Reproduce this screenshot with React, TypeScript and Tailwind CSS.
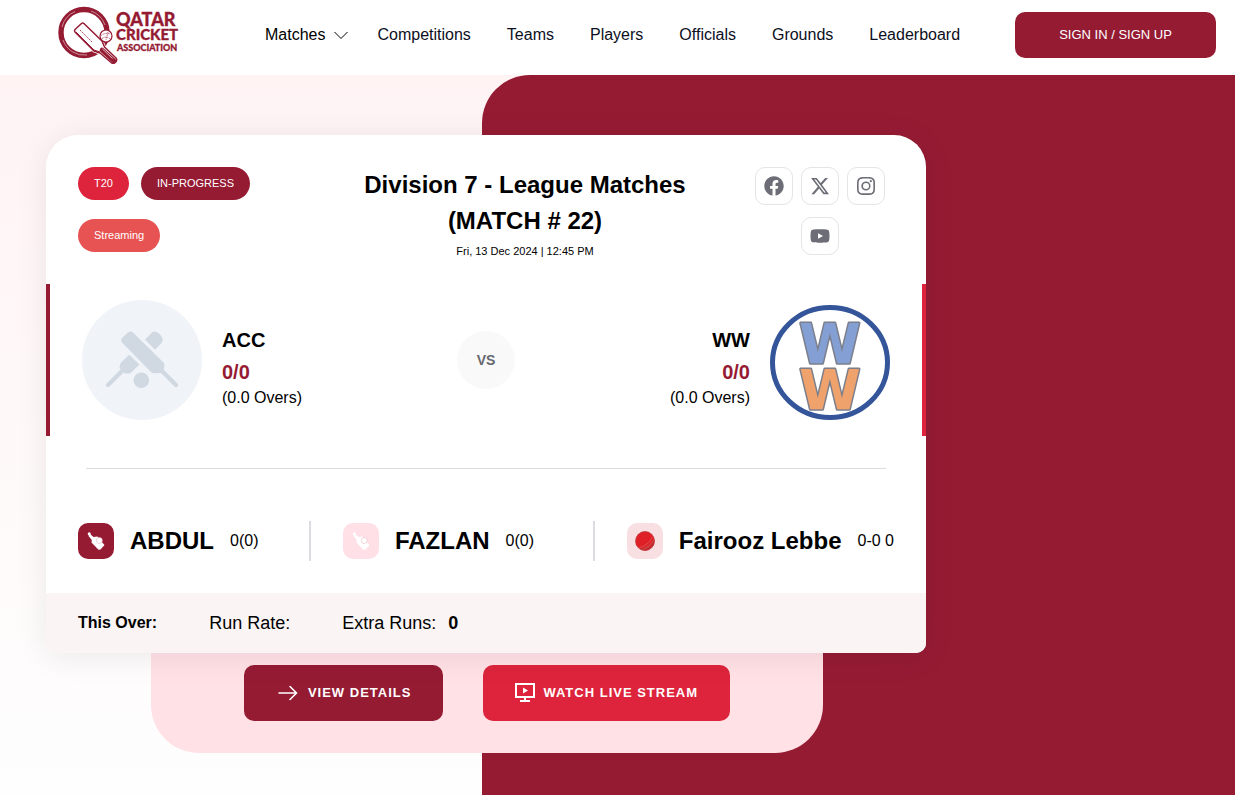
import { ReactNode } from 'react'
import { FaFacebook, FaYoutube } from 'react-icons/fa'
import { FaXTwitter } from 'react-icons/fa6'
import { BsInstagram } from 'react-icons/bs'

const navItems = ['Competitions', 'Teams', 'Players', 'Officials', 'Grounds', 'Leaderboard']

const socials = [
  { label: 'Facebook', icon: <FaFacebook className="size-5" /> },
  { label: 'X', icon: <FaXTwitter className="size-5" /> },
  { label: 'Instagram', icon: <BsInstagram className="size-[18px]" /> },
  { label: 'YouTube', icon: <FaYoutube className="size-5" /> },
]

const Logo = () => (
  <svg viewBox="0 0 124 60" className="h-[60px] w-[124px]" role="img" aria-label="Qatar Cricket Association">
    <circle cx="26" cy="27.5" r="23" fill="none" stroke="#951b33" strokeWidth="5.4" />
    <path
      d="M5 35a22.500 22.500 0 0 0 24 15M4 22A23 23 0 0 1 17 6.500M33 6a23 23 0 0 1 14 14"
      fill="none"
      stroke="#fff"
      strokeWidth="0.5"
    />
    <path
      d="M17 24.500l6.500-6q1.200-1 2.400 0L44 36l2.500 6L58 53q1.500 2-.3 4t-4 1L42 48l-6-2L17 27q-1-1.300 0-2.500z"
      fill="#fff"
      stroke="#fff"
      strokeWidth="3"
    />
    <path
      d="M17 24.500l6.500-6q1.200-1 2.400 0L44 36l2.500 6L58 53q1.500 2-.3 4t-4 1L42 48l-6-2L17 27q-1-1.300 0-2.500z"
      fill="#fff"
      stroke="#951b33"
      strokeWidth="1.5"
      strokeLinejoin="round"
    />
    <path d="M18 27l18 18 6 2" fill="none" stroke="#951b33" strokeWidth="1" />
    <path d="M44 45l12 11" stroke="#951b33" strokeWidth="4.6" strokeLinecap="round" />
    <path d="M44.500 44l10 9.500" stroke="#fff" strokeWidth="0.7" />
    <path d="M22 25l12 12" stroke="#951b33" strokeWidth="0.8" strokeDasharray="2 1" />
    <circle cx="48" cy="31" r="6" fill="#fff" stroke="#951b33" strokeWidth="1.2" />
    <path d="M43 30.500q4-3 9-1.500M44 33.500q5-3 8 .5M50 27l-2 8" fill="none" stroke="#951b33" strokeWidth="0.7" strokeDasharray="1.5 1" />
    <g fill="#951b33" stroke="#951b33" strokeWidth="0.3" fontFamily="Lato, 'Liberation Sans', sans-serif" fontWeight="900">
      <text x="58" y="21" fontSize="18">QATAR</text>
      <text x="58" y="35" fontSize="15">CRICKET</text>
      <text x="59" y="46" fontSize="9">ASSOCIATION</text>
    </g>
  </svg>
)

const DefaultTeamLogo = () => (
  <div className="size-[120px] shrink-0 rounded-full bg-[#f0f4f8]">
    <svg viewBox="0 0 120 120" className="size-[120px]" fill="#d0d8e2" stroke="#d0d8e2" strokeLinecap="round" aria-hidden="true">
      <g stroke="none">
        <path d="M40 38l6-5.500q3-2 5.500.5l30 29.500q1.300 1.300 1 3l-1 5.500q-.5 2-2.500 2l-7 .3q-1.600 0-3-1.300L40.500 43q-2.500-2.500-.5-5z" />
        <path d="M63 39.500l7-7q2-1.500 4.500-.5 4.500 2 6 6.500.7 2.500-1 4.500L73 49.700z" />
        <path d="M47.300 54.700l10 9.700-8 8q-1 1-2.500 1H43l-5.500-5.500.8-4q.3-1.200 1.200-2z" />
        <circle cx="59.300" cy="80.300" r="7.800" />
      </g>
      <path d="M79 70l15 15M42 69L26 85" strokeWidth="4.2" />
    </svg>
  </div>
)

const WWLogo = () => (
  <svg viewBox="0 0 120 120" className="size-[120px] shrink-0 overflow-visible" role="img" aria-label="WW">
    <ellipse cx="60" cy="62.500" rx="57.500" ry="55" fill="#fff" stroke="#34559a" strokeWidth="5" />
    <g
      fontFamily="'DejaVu Sans', sans-serif"
      fontWeight="700"
      fontSize="56"
      textAnchor="middle"
      strokeLinejoin="round"
      stroke="#7c7f8b"
      strokeWidth="3"
      paintOrder="stroke"
    >
      <text x="60" y="62.500" fill="#839fd4">W</text>
      <text x="60" y="108.500" fill="#f0a26c">W</text>
    </g>
  </svg>
)

const BatIcon = () => (
  <svg viewBox="0 0 18 18" className="size-[18px]" fill="currentColor" aria-hidden="true">
    <circle cx="2.200" cy="1.800" r="1.500" />
    <path d="M2.500 1.500l4 3.500 4-.5 3 4L17.500 13l-4 4.500-2 .3-7-7.300.3-2.500L1.500 4z" />
    <circle cx="12.300" cy="8.500" r="3" stroke="#e8b9c3" strokeWidth="0.6" />
  </svg>
)

const BallIcon = () => (
  <svg viewBox="0 0 20 20" className="size-5" aria-hidden="true">
    <circle cx="10" cy="10" r="9.700" fill="#df2027" />
    <path d="M19.300 8A9.700 9.700 0 0 1 4 17.500Q15 16 19.300 8z" fill="#c42a30" />
    <path d="M7 19Q15 16 19 9M4 17Q13 14.500 17.500 6" fill="none" stroke="#e0605f" strokeWidth="0.7" />
    <circle cx="10" cy="10" r="9.500" fill="none" stroke="#b04a4c" strokeWidth="0.5" />
  </svg>
)

const Badge = ({ children, className }: { children: ReactNode; className: string }) => (
  <span className={`rounded-full px-4 py-2 text-[11px] leading-[17px] text-white ${className}`}>{children}</span>
)

const TeamScore = ({ name, score, overs }: { name: string; score: string; overs: string }) => (
  <div className="pt-3">
    <h3 className="text-xl leading-8 font-bold">{name}</h3>
    <p className="text-xl leading-8 font-bold text-[#951b33]">{score}</p>
    <p className="text-base leading-5">({overs} Overs)</p>
  </div>
)

const Player = ({ name, score, icon, iconClass }: { name: string; score: string; icon: ReactNode; iconClass: string }) => (
  <div className="flex items-center gap-4 whitespace-nowrap">
    <div className={`flex size-9 shrink-0 items-center justify-center rounded-[10px] ${iconClass}`}>{icon}</div>
    <h4 className="text-2xl font-bold">{name}</h4>
    <span className="text-base">{score}</span>
  </div>
)

const Header = () => (
  <header className="flex h-[75px] items-center bg-white pr-[19px] pb-[5px] pl-[58px]">
    <a href="#">
      <Logo />
    </a>
    <nav className="ml-[83px] flex items-center gap-7 text-base text-[#0c0f22]">
      <a href="#" className="flex items-center gap-2 text-black">
        Matches
        <svg viewBox="0 0 16 16" className="size-4" fill="none" stroke="currentColor" aria-hidden="true">
          <path d="M1.500 5L8 11.500 14.500 5" />
        </svg>
      </a>
      <div className="flex items-center gap-9">
        {navItems.map((item) => (
          <a key={item} href="#">{item}</a>
        ))}
      </div>
    </nav>
    <button className="ml-auto h-[46px] w-[201px] rounded-[10px] bg-[#951b33] text-[13px] text-white">
      SIGN IN / SIGN UP
    </button>
  </header>
)

const MatchCard = () => (
  <section className="relative z-10 w-full max-w-[880px] rounded-t-[32px] rounded-b-[10px] bg-white shadow-[0_4px_32px_rgba(0,0,0,0.08)]">
    <div className="flex px-8 pt-8 pb-5">
      <div className="flex w-[226px] flex-wrap content-start gap-x-3 gap-y-[19px]">
        <Badge className="bg-[#dd243c]">T20</Badge>
        <Badge className="bg-[#951b33]">IN-PROGRESS</Badge>
        <Badge className="bg-[#e65352]">Streaming</Badge>
      </div>
      <div className="flex-1 text-center">
        <h2 className="text-2xl leading-9 font-bold">
          Division 7 - League Matches
          <br />
          (MATCH # 22)
        </h2>
        <p className="text-[11px] leading-[25px]">Fri, 13 Dec 2024 | 12:45 PM</p>
      </div>
      <div className="flex w-[148px] flex-wrap content-start justify-center gap-x-2 gap-y-3">
        {socials.map((s) => (
          <a
            key={s.label}
            href="#"
            aria-label={s.label}
            className="flex size-[38px] items-center justify-center rounded-[10px] border border-[#e4e4e9] text-[#6c6d76]"
          >
            {s.icon}
          </a>
        ))}
      </div>
    </div>

    <div className="flex items-center justify-between border-x-4 border-r-[#dd243c] border-l-[#951b33] px-8 py-4">
      <div className="flex items-center gap-5">
        <DefaultTeamLogo />
        <TeamScore name="ACC" score="0/0" overs="0.0" />
      </div>
      <div className="flex size-[58px] items-center justify-center rounded-full bg-[#f9f9f9] text-sm font-bold text-[#66676f]">
        VS
      </div>
      <div className="flex items-center gap-5 text-right">
        <TeamScore name="WW" score="0/0" overs="0.0" />
        <WWLogo />
      </div>
    </div>

    <hr className="mx-10 mt-8 border-[#dcdce0]" />

    <div className="grid grid-cols-[233fr_284fr_299fr] px-8 pt-[52px] pb-8">
      <div className="flex h-10 items-center border-r-2 border-[#dcdce4]">
        <Player name="ABDUL" score="0(0)" icon={<BatIcon />} iconClass="bg-[#951b33] text-white" />
      </div>
      <div className="flex h-10 items-center border-r-2 border-[#dcdce4] pl-8">
        <Player name="FAZLAN" score="0(0)" icon={<BatIcon />} iconClass="bg-[#ffe0e6] text-white" />
      </div>
      <div className="flex h-10 items-center pl-8">
        <Player name="Fairooz Lebbe" score="0-0 0" icon={<BallIcon />} iconClass="bg-[#f8dfe1]" />
      </div>
    </div>

    <div className="flex h-[60px] items-center gap-[52px] rounded-b-[10px] bg-[#faf4f4] px-8 text-lg">
      <span className="text-base font-bold">This Over:</span>
      <span>Run Rate:</span>
      <span className="flex gap-3">
        Extra Runs: <b>0</b>
      </span>
    </div>
  </section>
)

const Actions = () => (
  <div className="ml-[105px] flex max-w-[672px] justify-center gap-10 rounded-b-[48px] bg-[#ffe1e6] pt-3 pb-8 text-[13px] font-bold tracking-[1px] text-white">
    <button className="flex h-14 items-center gap-[10px] rounded-[10px] bg-[#951b33] pr-8 pl-[34px]">
      <svg viewBox="0 0 20 16" className="h-4 w-5" fill="none" stroke="currentColor" strokeWidth="1.600" strokeLinecap="round" aria-hidden="true">
        <path d="M1 8h17M12 1.500L18.500 8 12 14.500" />
      </svg>
      VIEW DETAILS
    </button>
    <button className="flex h-14 items-center gap-2 rounded-[10px] bg-[#dd243c] px-8">
      <svg viewBox="0 0 20 20" className="size-5" aria-hidden="true">
        <path d="M1 1h18v13H1zM10 14v4M5 18h10" fill="none" stroke="currentColor" strokeWidth="2" />
        <path d="M8 4.500v6l5-3z" fill="currentColor" />
      </svg>
      WATCH LIVE STREAM
    </button>
  </div>
)

export default function App() {
  return (
    <div className="flex min-h-screen flex-col bg-white font-['Liberation_Sans',Arial,sans-serif] text-black">
      <Header />
      <main className="grid flex-1 bg-linear-to-b from-[#fff3f4] to-[#fefefe]">
        <div className="col-start-1 row-start-1 ml-[39%] rounded-tl-[48px] bg-[#951b33]" />
        <div className="col-start-1 row-start-1 pt-[60px] pb-[42px] pl-[46px]">
          <MatchCard />
          <Actions />
        </div>
      </main>
    </div>
  )
}
